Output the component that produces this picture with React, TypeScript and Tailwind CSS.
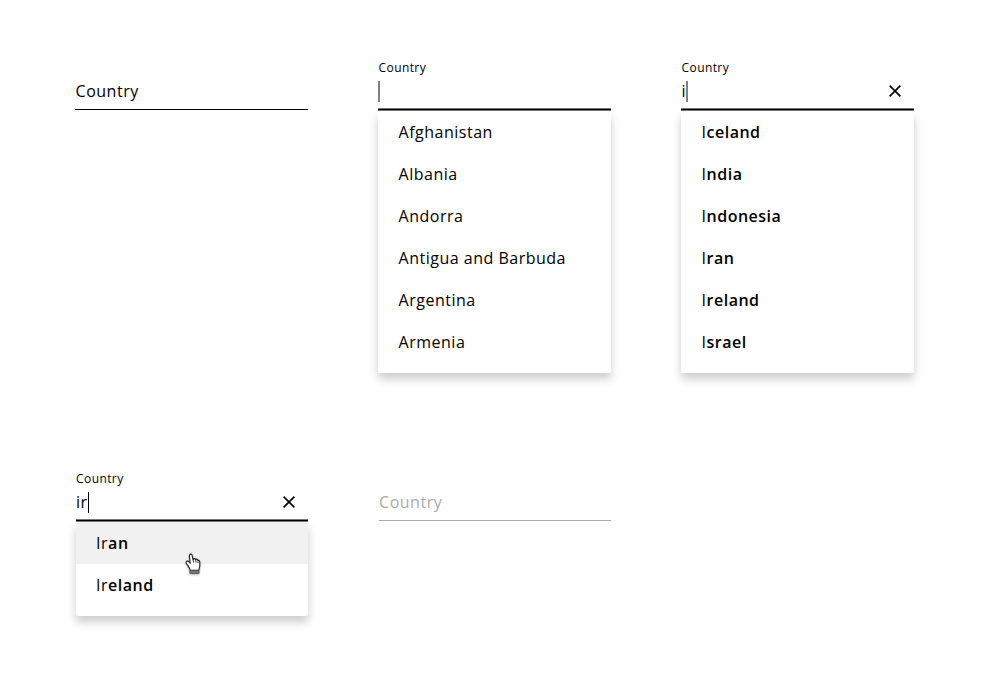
import React from "react";

type Item = { typed: string; rest: string; bold?: boolean; hover?: boolean };

function Close() {
  return (
    <svg width="12" height="12" viewBox="0 0 12 12" className="mr-[13px]" fill="none" stroke="#000" strokeWidth="1.6">
      <path d="M0.6 0.6 11.4 11.4M11.4 0.6 0.6 11.4" />
    </svg>
  );
}

function Hand() {
  return (
    <svg width="16" height="22" viewBox="0 0 16 22" className="absolute left-[109px] top-[31px] drop-shadow-[0_1px_1px_rgba(0,0,0,0.3)]" fill="#fff" stroke="#222" strokeWidth="1.1" strokeLinejoin="round" strokeLinecap="round">
      <path d="M5.2 17.4C5 14.8 2.8 13 1.4 10.4.5 8.7 2.1 7.2 3.4 8.4L5.2 10.2 4.4 3.2C4.1.8 6.6.3 7.1 2.4L8.1 6.6C8.6 5.2 10.3 5.3 10.7 6.6 11.4 5.8 12.7 6.2 13 7.5 13.9 7 14.8 7.8 14.8 9V12.8C14.8 14.8 13.8 15.8 13.8 17.4Z" />
      <path d="M8.1 6.6 8.5 9.2M10.7 6.6 11 9.2M13 7.5V9.6" fill="none" strokeWidth="0.9" />
      <path d="M5.2 17.6H14V20.4H5.2Z" fill="#777" stroke="#555" strokeWidth="0.9" />
    </svg>
  );
}

function Field({ value, clear, caret }: { value: string; clear?: boolean; caret: string }) {
  return (
    <>
      <div className="h-[18px] pl-[0.6px] text-[12px] leading-[18px] tracking-[0.4px]">Country</div>
      <div className="flex h-[31px] items-center justify-between pb-[3px]">
        <div className="flex items-center">
          {value && <span className="pl-[0.5px] text-[16px] leading-[24px] tracking-[0.5px]">{value}</span>}
          <span className={`h-[21px] ${caret}`} />
        </div>
        {clear && <Close />}
      </div>
      <div className="h-[3px] border-y border-[#777] bg-black" />
    </>
  );
}

function Menu({ items }: { items: Item[] }) {
  return (
    <div className="ml-[0.4px] rounded-b-[2px] bg-white pb-[10px] shadow-[0_6px_10px_rgba(0,0,0,0.2)]">
      {items.map((item) => (
        <div key={item.typed + item.rest} className={`relative flex h-[42px] items-center pl-[20.2px] text-[16px] tracking-[0.5px] ${item.hover ? "bg-[#f1f1f1]" : ""}`}>
          <span>{item.typed}</span>
          <span className={item.bold ? "font-semibold" : ""}>{item.rest}</span>
          {item.hover && <Hand />}
        </div>
      ))}
    </div>
  );
}

const all = ["Afghanistan", "Albania", "Andorra", "Antigua and Barbuda", "Argentina", "Armenia"];
const matches = ["celand", "ndia", "ndonesia", "ran", "reland", "srael"];

export default function App() {
  return (
    <main className="grid h-[696px] w-[989px] grid-cols-[233px_233px_233px] grid-rows-[411px_1fr] gap-x-[70px] bg-white pl-[75px] pt-[59px] font-['Open_Sans',sans-serif] text-black">
      <div>
        <div className="mt-[17px] h-[34px] border-b border-black pl-[0.6px] text-[16px] leading-[30px] tracking-[0.5px]">Country</div>
      </div>
      <div>
        <Field value="" caret="w-[2px] bg-[#808080]" />
        <Menu items={all.map((rest) => ({ typed: "", rest }))} />
      </div>
      <div>
        <Field value="i" caret="w-[2px] bg-[#808080]" clear />
        <Menu items={matches.map((rest) => ({ typed: "I", rest, bold: true }))} />
      </div>
      <div className="ml-[0.5px] mr-[-0.2px]">
        <Field value="ir" caret="w-px bg-black" clear />
        <Menu items={[{ typed: "Ir", rest: "an", bold: true, hover: true }, { typed: "Ir", rest: "eland", bold: true }]} />
      </div>
      <div className="ml-[0.5px] mr-[-0.2px]">
        <div className="mt-[17px] h-[34px] border-b border-[#aaa] pl-[0.6px] text-[16px] leading-[30px] tracking-[0.5px] text-[#aaa]">Country</div>
      </div>
    </main>
  );
}
